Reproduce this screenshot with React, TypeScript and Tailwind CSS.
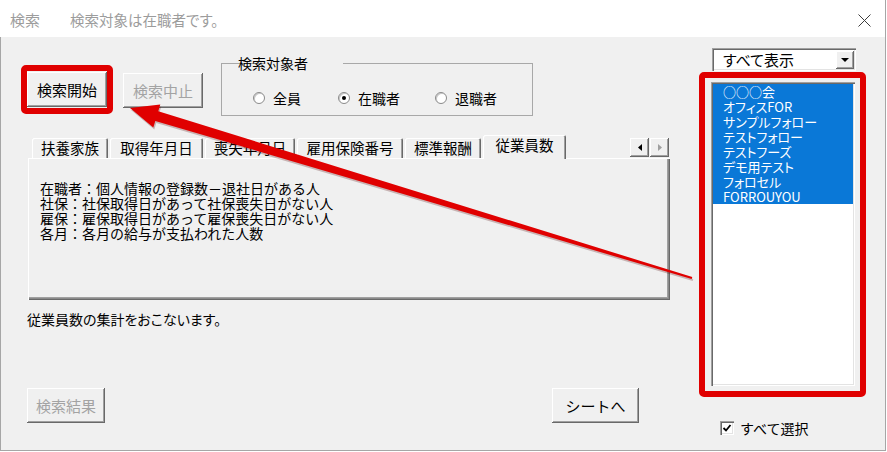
import React from "react";

const raised =
  "shadow-[inset_-1px_-1px_0_#696969,inset_1px_1px_0_#ffffff,inset_-2px_-2px_0_#a0a0a0]";
const sunken =
  "shadow-[inset_1px_1px_0_#a0a0a0,inset_2px_2px_0_#696969,inset_-1px_-1px_0_#ffffff,inset_-2px_-2px_0_#e3e3e3]";

function Button({
  label,
  disabled,
  w,
}: {
  label: string;
  disabled?: boolean;
  w: string;
}) {
  return (
    <div
      className={`${w} h-[35px] bg-[#f0f0f0] flex items-center justify-center text-[15px] leading-[18px] ${raised} ${
        disabled ? "text-[#a3a3a3]" : "text-black"
      }`}
    >
      {label}
    </div>
  );
}

function Radio({ label, checked, w }: { label: string; checked?: boolean; w?: string }) {
  return (
    <div className={`flex items-center gap-[8px] h-[16px] ${w ?? ""}`}>
      <div className="w-[12px] h-[12px] rounded-full bg-white border border-[#8a8a8a] shadow-[inset_1px_1px_0_#c8c8c8] flex items-center justify-center">
        {checked && <div className="w-[4px] h-[4px] rounded-full bg-black" />}
      </div>
      <span className="text-[14px] leading-[16px] text-black">{label}</span>
    </div>
  );
}

const tabs: { label: string; w: string }[] = [
  { label: "扶養家族", w: "w-[76px]" },
  { label: "取得年月日", w: "w-[93px]" },
  { label: "喪失年月日", w: "w-[90px]" },
  { label: "雇用保険番号", w: "w-[106px]" },
  { label: "標準報酬", w: "w-[76px]" },
];

const companies = [
  "○○○会",
  "オフィスFOR",
  "サンプルフォロー",
  "テストフォロー",
  "テストフーズ",
  "デモ用テスト",
  "フォロセル",
  "FORROUYOU",
];

export default function App() {
  return (
    <div className="relative w-[887px] h-[452px] bg-white overflow-hidden font-['Noto_Sans_CJK_JP',sans-serif] text-black">
      <div className="w-[886px] h-[451px] border-r border-[#a6a6a6] flex flex-col">
        {/* title bar */}
        <div className="h-[37px] shrink-0 bg-white flex items-center pt-[3px]">
          <span className="ml-[10px] text-[15px] leading-[18px] text-[#9c9c9c]">検索</span>
          <span className="ml-[30px] text-[14.5px] leading-[18px] text-[#9c9c9c] [font-feature-settings:'palt']">
            検索対象は在職者です。
          </span>
          <svg className="ml-auto mr-[14px]" width="13" height="13" viewBox="0 0 13 13">
            <path d="M0.5 0.5 L12.5 12.5 M12.5 0.5 L0.5 12.5" stroke="#3c3c3c" strokeWidth="1" />
          </svg>
        </div>

        {/* dialog body */}
        <div className="flex-1 bg-[#f0f0f0] border-l border-b border-[#a6a6a6] flex">
          {/* left column */}
          <div className="w-[669px] pl-[26px] pt-[18px] flex flex-col">
            <div className="flex items-start">
              <div className="-ml-[6px] mt-[10px] border-[6px] border-[#e00000] rounded-[5px] py-px">
                <Button label="検索開始" w="w-[80px]" />
              </div>
              <div className="ml-[10px] mt-[18px]">
                <Button label="検索中止" w="w-[80px]" disabled />
              </div>
              <fieldset className="ml-[18px] w-[312px] h-[61px] border border-[#a8a8a8] pl-[31px]">
                <legend className="ml-[12px] px-[4px] text-[14px] leading-[16px] -translate-x-[31px]">
                  検索対象者
                </legend>
                <div className="flex items-center mt-[19px]">
                  <Radio label="全員" w="w-[85px]" />
                  <Radio label="在職者" checked w="w-[97px]" />
                  <Radio label="退職者" />
                </div>
              </fieldset>
            </div>

            {/* tab strip */}
            <div className="mt-[19px] ml-[5px] w-[637px] h-[23px] flex items-end">
              {tabs.map((t, i) => (
                <div
                  key={t.label}
                  className={`${t.w} ${i > 0 ? "ml-[2px]" : ""} h-[20px] rounded-t-[2px] bg-[#f0f0f0] flex items-center justify-center text-[14.5px] leading-[16px] shadow-[inset_1px_1px_0_#ffffff,inset_-1px_0_0_#696969,inset_-2px_0_0_#a0a0a0]`}
                >
                  {t.label}
                </div>
              ))}
              <div className="relative z-10 ml-[2px] w-[83px] h-[24px] -mb-px rounded-t-[2px] bg-[#f0f0f0] flex items-center justify-center pb-[4px] text-[14.5px] leading-[16px] shadow-[inset_1px_1px_0_#ffffff,inset_-1px_0_0_#696969,inset_-2px_0_0_#a0a0a0]">
                従業員数
              </div>
              <div className="ml-auto flex gap-px mb-[1px]">
                <div className={`w-[19px] h-[19px] bg-[#f0f0f0] flex items-center justify-center ${raised}`}>
                  <svg width="4" height="7" viewBox="0 0 4 7">
                    <polygon points="4,0 4,7 0,3.5" fill="#000" />
                  </svg>
                </div>
                <div className={`w-[19px] h-[19px] bg-[#f0f0f0] flex items-center justify-center ${raised}`}>
                  <svg width="4" height="7" viewBox="0 0 4 7">
                    <polygon points="0,0 0,7 4,3.5" fill="#a0a0a0" />
                  </svg>
                </div>
              </div>
            </div>

            {/* tab page */}
            <div className="ml-px w-[642px] h-[142px] bg-[#f0f0f0] pl-[12px] pt-[23px] text-[14px] leading-[15px] shadow-[inset_1px_1px_0_#ffffff,inset_-1px_-1px_0_#696969,inset_-2px_-2px_0_#8a8a8a,inset_-3px_-3px_0_#a0a0a0]">
              <div>在職者：個人情報の登録数－退社日がある人</div>
              <div>社保：社保取得日があって社保喪失日がない人</div>
              <div>雇保：雇保取得日があって雇保喪失日がない人</div>
              <div>各月：各月の給与が支払われた人数</div>
            </div>

            <div className="mt-[9px] text-[14px] leading-[20px] [font-feature-settings:'palt']">
              従業員数の集計をおこないます。
            </div>

            <div className="mt-[59px] flex items-start">
              <Button label="検索結果" w="w-[78px]" disabled />
              <div className="ml-[447px]">
                <Button label="シートへ" w="w-[87px]" />
              </div>
            </div>
          </div>

          {/* right column */}
          <div className="pl-[29px] pt-[11px] flex flex-col">
            <div className={`ml-[13px] w-[144px] h-[23px] bg-white flex items-center ${sunken}`}>
              <span className="ml-[11px] text-[15px] leading-[18px] [font-feature-settings:'palt']">
                すべて表示
              </span>
              <div className={`ml-auto mr-[2px] w-[18px] h-[18px] bg-[#f0f0f0] flex items-center justify-center ${raised}`}>
                <svg width="8" height="4" viewBox="0 0 8 4">
                  <polygon points="0,0 8,0 4,4" fill="#000" />
                </svg>
              </div>
            </div>

            <div className="mt-px w-[167px] h-[325px] border-[6px] border-[#e00000] rounded-[5px] pt-[4px] pl-[6px]">
              <div className={`w-[144px] h-[304px] bg-white p-[2px] ${sunken}`}>
                <div className="bg-[#0a78d7] text-white pl-[10px] text-[13px] leading-[15px] [font-feature-settings:'palt']">
                  {companies.map((c) => (
                    <div key={c}>{c}</div>
                  ))}
                </div>
              </div>
            </div>

            <div className="mt-[23px] ml-[21px] flex items-center">
              <div className={`w-[14px] h-[14px] bg-white flex items-center justify-center ${sunken}`}>
                <svg width="10" height="10" viewBox="0 0 10 10">
                  <path d="M1.5 5 L4 7.5 L8.5 2" stroke="#000" strokeWidth="1.8" fill="none" />
                </svg>
              </div>
              <span className="ml-[6px] text-[14px] leading-[16px]">すべて選択</span>
            </div>
          </div>
        </div>
      </div>

      {/* pointer arrow drawn over the dialog */}
      <svg
        className="absolute inset-0 pointer-events-none"
        width="887"
        height="452"
        viewBox="0 0 887 452"
      >
        <polygon
          points="131,110 161.3,106.6 159.3,113.3 693.3,279 692.7,281 156.3,122.9 154.3,129.6"
          fill="rgba(80,0,0,0.25)"
        />
        <polygon
          points="130,108 160.3,104.6 158.3,111.3 692.3,277 691.7,279 155.3,120.9 153.3,127.6"
          fill="#e00000"
        />
      </svg>
    </div>
  );
}
